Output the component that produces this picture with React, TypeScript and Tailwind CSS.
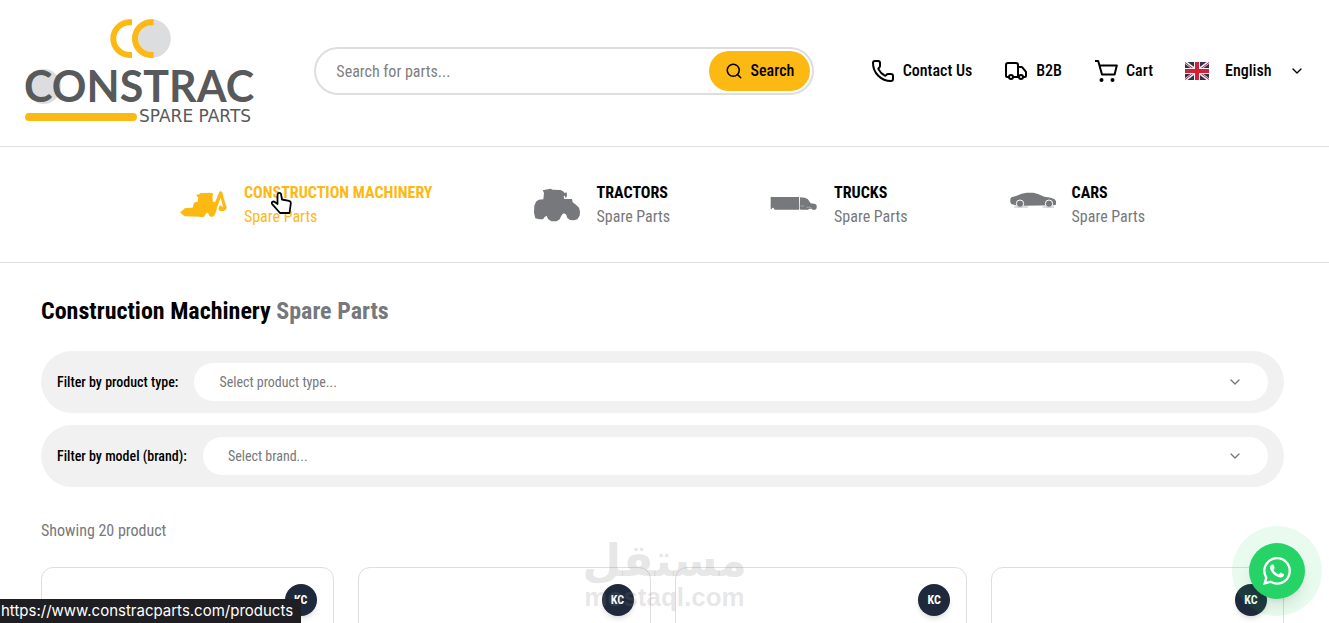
import { ChevronDown, Phone, Search, Truck } from 'lucide-react';

const categories = [
  { name: 'CONSTRUCTION MACHINERY', icon: LoaderIcon, active: true },
  { name: 'TRACTORS', icon: TractorIcon, active: false },
  { name: 'TRUCKS', icon: LorryIcon, active: false },
  { name: 'CARS', icon: CarIcon, active: false },
];

const filters = [
  { id: 'product-type', label: 'Filter by product type:', placeholder: 'Select product type...' },
  { id: 'brand', label: 'Filter by model (brand):', placeholder: 'Select brand...' },
];

const products = ['KC', 'KC', 'KC', 'KC'];

function LoaderIcon() {
  return (
    <svg viewBox="60 33 144 144" className="h-12 w-12 shrink-0" fill="currentColor" aria-hidden="true">
      <path d="M60 127L68 121L74 115L90 113L98 113L102 98L108 96L113 95L115 82L109 78L110 74L118 73L120 70L150 68L158 70L159 76L157 80L159 96L166 95L172 80L178 66L182 63L187 67L190 80L195 96L200 112L198 119L190 123L180 123L175 118L177 109L182 106L189 112L186 98L182 84L178 94L172 110L167 128L162 138L154 141L148 137L144 129L138 130L134 139L126 142L118 140L74 139L68 134Z" />
    </svg>
  );
}

function TractorIcon() {
  return (
    <svg viewBox="39 32 144 144" className="h-12 w-12 shrink-0" fill="currentColor" aria-hidden="true">
      <path d="M68 60L76 58L92 55L98 58L122 59L128 62L134 68L140 66L141 78L137 83L134 76L131 77L133 86L156 86L158 96L168 103L177 112L180 124L179 136L172 147L162 150L150 149L142 143L138 132L130 129L124 136L119 147L110 153L94 153L84 146L80 136L74 140L69 147L58 147L46 144L42 128L43 106L48 94L56 88L70 87L72 68Z" />
    </svg>
  );
}

function LorryIcon() {
  return (
    <svg viewBox="750 34 144 144" className="h-12 w-12 shrink-0" fill="currentColor" aria-hidden="true">
      <path d="M752 82H837V120H764L760 114L756 115L755 119H752Z" />
      <path d="M840 83L854 84L863 88L872 101L886 103L890 107V116L885 121L878 120L875 117L868 117L864 120L842 120L839 117Z" />
      <path d="M860 113H874M842 109H852" stroke="#fff" strokeWidth="1" />
    </svg>
  );
}

function CarIcon() {
  return (
    <svg viewBox="744 34 144 144" className="h-12 w-12 shrink-0 overflow-visible" fill="currentColor" aria-hidden="true">
      <path d="M751 98L751 88L754 83L768 79L785 72L800 69H820L834 73L853 81L872 84L884 89L888 95V105L880 107L793 108L767 107L754 103Z" />
      <circle cx="780" cy="102" r="11" stroke="#fff" strokeWidth="3" />
      <circle cx="867" cy="102" r="11" stroke="#fff" strokeWidth="3" />
      <path d="M762 111h42v2h-42zM848 111h34v2h-34z" />
    </svg>
  );
}

function CartIcon() {
  return (
    <svg viewBox="0 0 24 24" className="h-6 w-6" fill="none" stroke="currentColor" strokeWidth="2" aria-hidden="true">
      <path d="M1 2h3.2l3.8 13.5h12.6L22.8 6.500H5.500" strokeLinejoin="round" />
      <circle cx="7.5" cy="21" r="2" fill="currentColor" stroke="none" />
      <circle cx="18.5" cy="21" r="2" fill="currentColor" stroke="none" />
    </svg>
  );
}

function UkFlag() {
  return (
    <svg viewBox="0 0 24 18" className="h-[18px] w-6" aria-hidden="true">
      <path fill="#2b3550" d="M0 0h24v18H0z" />
      <path stroke="#f0f0f0" strokeWidth="3" d="M0 0l24 18M24 0L0 18" />
      <path stroke="#c8243c" strokeWidth="1" d="M0 .5l10 7.5M24 17.5l-10-7.5M24 .5L14 8M0 17.5l10-7.5" />
      <path stroke="#f0f0f0" strokeWidth="6" d="M12 0v18M0 9h24" />
      <path stroke="#d0203a" strokeWidth="4" d="M12 0v18M0 9h24" />
    </svg>
  );
}

function Logo() {
  return (
    <svg
      viewBox="24 18 234 106"
      className="h-[106px] w-[234px] shrink-0 overflow-visible"
      role="img"
      aria-label="Constrac Spare Parts"
    >
      <circle cx="151.5" cy="38.6" r="19.3" fill="#dcddde" />
      <path d="M132 22.2h-2.3a16.4 16.4 0 0 0 0 32.8h2.3" fill="none" stroke="#fdb913" strokeWidth="6" />
      <path d="M153.7 22.2h-2.3a16.4 16.4 0 0 0 0 32.8h2.3" fill="none" stroke="#fdb913" strokeWidth="6" />
      <circle cx="43.5" cy="86.5" r="17.5" fill="#dcddde" />
      <text x="24" y="102" fontSize="43" fontWeight="700" fill="#58595b" className="font-['Lato',sans-serif]">
        CONSTRAC
      </text>
      <rect x="25" y="113" width="112" height="8" rx="4" fill="#fdb913" />
      <text x="139" y="122" fontSize="17" fill="#58595b" className="font-['DejaVu_Sans',sans-serif]">
        SPARE PARTS
      </text>
    </svg>
  );
}

export default function App() {
  return (
    <div className="relative h-screen overflow-hidden bg-white font-['Roboto_Condensed','Liberation_Sans_Narrow','Roboto',sans-serif] text-base text-black">
      <header className="flex items-center justify-between border-b border-[#dedede] px-6 pt-[18px] pb-[22px]">
        <a href="/">
          <Logo />
        </a>

        <form className="flex h-12 w-[500px] items-center rounded-full border-2 border-[#dedede] pr-0.5 pl-5">
          <input
            type="text"
            aria-label="Search for parts"
            placeholder="Search for parts..."
            className="h-10 min-w-0 flex-1 outline-none placeholder:text-[#808080]"
          />
          <button type="button" className="flex h-10 items-center gap-2 rounded-full bg-[#fdb913] px-4 font-medium">
            <Search className="h-[18px] w-[18px]" />
            Search
          </button>
        </form>

        <nav className="flex items-center gap-8 font-medium">
          <a href="/contact" className="flex items-center gap-2">
            <Phone className="h-6 w-6" />
            Contact Us
          </a>
          <a href="/b2b" className="flex items-center gap-2">
            <Truck className="h-6 w-6" />
            B2B
          </a>
          <a href="/cart" className="flex items-center gap-2">
            <CartIcon />
            Cart
          </a>
          <div className="flex items-center gap-4">
            <UkFlag />
            <div className="relative flex items-center">
              <select aria-label="Language" className="w-20 appearance-none outline-none">
                <option>English</option>
              </select>
              <ChevronDown className="pointer-events-none absolute right-0 h-4 w-4" />
            </div>
          </div>
        </nav>
      </header>

      {/* Categories */}
      <nav className="flex justify-center gap-[100px] border-b border-[#dedede] py-8 pr-1">
        {categories.map(({ name, icon: Icon, active }) => (
          <a
            key={name}
            href="/products"
            className={`flex h-[51px] items-center gap-4 ${active ? 'text-[#fdb913]' : 'text-[#77787b]'}`}
          >
            <Icon />
            <span>
              <span className={`block font-bold ${active ? '' : 'text-black'}`}>{name}</span>
              <span className="block">Spare Parts</span>
            </span>
          </a>
        ))}
      </nav>

      <main className="pt-8 pr-[45px] pl-[41px]">
        <h1 className="mb-6 text-2xl font-bold">
          Construction Machinery <span className="text-[#77787b]">Spare Parts</span>
        </h1>

        <div className="space-y-3">
          {filters.map((filter) => (
            <div key={filter.id} className="flex items-center gap-4 rounded-full bg-[#f1f1f1] px-4 py-3 text-sm">
              <label htmlFor={filter.id} className="font-medium">
                {filter.label}
              </label>
              <div className="relative flex flex-1 items-center">
                <select
                  id={filter.id}
                  className="h-[38px] w-full appearance-none rounded-full bg-white px-[25px] text-[#77787b] outline-none"
                >
                  <option>{filter.placeholder}</option>
                </select>
                <ChevronDown className="pointer-events-none absolute right-[25px] h-4 w-4 text-[#77787b]" />
              </div>
            </div>
          ))}
        </div>

        <p className="mt-8 mb-6 text-[#77787b]">Showing 20 product</p>

        <div className="grid grid-cols-4 gap-6">
          {products.map((badge, i) => (
            <article key={i} className="flex h-96 justify-end rounded-xl border border-[#dedede] p-4">
              <span className="flex h-8 w-8 items-center justify-center rounded-full bg-[#1e293b] text-xs font-bold text-white shadow-md">
                {badge}
              </span>
            </article>
          ))}
        </div>
      </main>

      {/* Watermark */}
      <div className="pointer-events-none absolute bottom-2.5 left-1/2 flex -translate-x-1/2 flex-col items-center font-bold text-[#808080]/20">
        <span lang="ar" dir="rtl" className="font-['DejaVu_Sans',sans-serif] text-[45px] leading-10">
          مستقل
        </span>
        <span className="font-['Liberation_Sans',sans-serif] text-[26px] leading-8">mostaql.com</span>
      </div>

      {/* WhatsApp */}
      <div className="absolute right-[7px] bottom-[7px] flex h-[90px] w-[90px] items-center justify-center rounded-full bg-[#25d366]/10">
        <button
          type="button"
          aria-label="Chat on WhatsApp"
          className="flex h-14 w-14 items-center justify-center rounded-full bg-[#25d366] text-white shadow-lg"
        >
          <svg viewBox="0 0 24 24" className="h-7 w-7" fill="currentColor" aria-hidden="true">
            <path d="M17.472 14.382c-.297-.149-1.758-.867-2.03-.967-.273-.099-.471-.148-.67.15-.197.297-.767.966-.94 1.164-.173.199-.347.223-.644.075-.297-.15-1.255-.463-2.39-1.475-.883-.788-1.48-1.761-1.653-2.059-.173-.297-.018-.458.13-.606.134-.133.298-.347.446-.52.149-.174.198-.298.298-.497.099-.198.05-.371-.025-.52-.075-.149-.669-1.612-.916-2.207-.242-.579-.487-.5-.669-.51-.173-.008-.371-.01-.57-.01-.198 0-.52.074-.792.372-.272.297-1.04 1.016-1.04 2.479 0 1.462 1.065 2.875 1.213 3.074.149.198 2.096 3.2 5.077 4.487.709.306 1.262.489 1.694.625.712.227 1.36.195 1.871.118.571-.085 1.758-.719 2.006-1.413.248-.694.248-1.289.173-1.413-.074-.124-.272-.198-.57-.347m-5.421 7.403h-.004a9.87 9.87 0 01-5.031-1.378l-.361-.214-3.741.982.998-3.648-.235-.374a9.86 9.86 0 01-1.51-5.26c.001-5.45 4.436-9.884 9.888-9.884 2.64 0 5.122 1.03 6.988 2.898a9.825 9.825 0 012.893 6.994c-.003 5.45-4.437 9.884-9.885 9.884m8.413-18.297A11.815 11.815 0 0012.05 0C5.495 0 .16 5.335.157 11.892c0 2.096.547 4.142 1.588 5.945L.057 24l6.305-1.654a11.882 11.882 0 005.683 1.448h.005c6.554 0 11.89-5.335 11.893-11.893a11.821 11.821 0 00-3.48-8.413z" />
          </svg>
        </button>
      </div>

      {/* Link preview */}
      <div className="absolute bottom-0 left-0 bg-[#1f1f23] pr-2 pl-px font-['Inter',sans-serif] text-[15px] leading-6 text-white">
        https://www.constracparts.com/products
      </div>

      {/* Pointer */}
      <svg
        viewBox="0 0 22 24"
        className="absolute top-[191px] left-[270px] h-6 w-[22px]"
        fill="#fff"
        stroke="#000"
        strokeWidth="1.8"
        strokeLinejoin="round"
        aria-hidden="true"
      >
        <path d="M7.500 13V4C7.500 1.200 11 1.200 11.200 4L12 8.500L19 9.800C20.600 10.200 21 11 20.800 12.500L19.500 22H10L2 12.800C1.200 11 3.200 9.800 4.800 11Z" />
      </svg>
    </div>
  );
}
